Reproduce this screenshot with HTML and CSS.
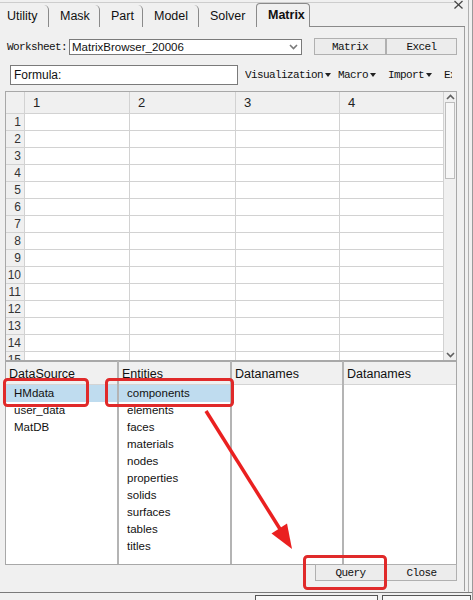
FILE: index.html
```html
<!DOCTYPE html>
<html>
<head>
<meta charset="utf-8">
<link rel="stylesheet" href="styles.css">
</head>
<body>
<div class="win">
  <div class="topline"></div>
  <div class="tabs">
    <div class="tab first">Utility</div>
    <div class="tab w51">Mask</div>
    <div class="tab w43">Part</div>
    <div class="tab w56">Model</div>
    <div class="tab w57 noedge">Solver</div>
    <div class="tab active">Matrix</div>
    <div class="tabfill"></div>
  </div>
  <div class="panel">
    <div class="wsrow">
      <span class="mono wslabel">Worksheet:</span>
      <div class="select">MatrixBrowser_20006
        <svg class="selarrow" width="9" height="6" viewBox="0 0 9 6"><polyline points="1,1 4.5,4.5 8,1" fill="none" stroke="#7a7a7a" stroke-width="1.6"/></svg>
      </div>
      <div class="btn mono b72">Matrix</div>
      <div class="btn mono b71">Excel</div>
    </div>
    <div class="frow">
      <div class="formula">Formula:</div>
      <div class="menus mono">
        <span class="menu m1">Visualization<svg width="6" height="4" viewBox="0 0 6 4"><polygon points="0,0 6,0 3,4" fill="#222"/></svg></span>
        <span class="menu m2">Macro<svg width="6" height="4" viewBox="0 0 6 4"><polygon points="0,0 6,0 3,4" fill="#222"/></svg></span>
        <span class="menu m2">Import<svg width="6" height="4" viewBox="0 0 6 4"><polygon points="0,0 6,0 3,4" fill="#222"/></svg></span>
        <span class="menu">Export</span>
      </div>
    </div>
    <div class="grid">
      <div class="cells">
        <div class="hd"></div><div class="hd">1</div><div class="hd">2</div><div class="hd">3</div><div class="hd">4</div>
        <div class="rh">1</div><div></div><div></div><div></div><div></div>
        <div class="rh">2</div><div></div><div></div><div></div><div></div>
        <div class="rh">3</div><div></div><div></div><div></div><div></div>
        <div class="rh">4</div><div></div><div></div><div></div><div></div>
        <div class="rh">5</div><div></div><div></div><div></div><div></div>
        <div class="rh">6</div><div></div><div></div><div></div><div></div>
        <div class="rh">7</div><div></div><div></div><div></div><div></div>
        <div class="rh">8</div><div></div><div></div><div></div><div></div>
        <div class="rh">9</div><div></div><div></div><div></div><div></div>
        <div class="rh">10</div><div></div><div></div><div></div><div></div>
        <div class="rh">11</div><div></div><div></div><div></div><div></div>
        <div class="rh">12</div><div></div><div></div><div></div><div></div>
        <div class="rh">13</div><div></div><div></div><div></div><div></div>
        <div class="rh">14</div><div></div><div></div><div></div><div></div>
        <div class="rh">15</div><div></div><div></div><div></div><div></div>
      </div>
      <div class="vscroll">
        <div class="arrow"><svg width="9" height="6" viewBox="0 0 9 6"><polyline points="1,5 4.5,1.5 8,5" fill="none" stroke="#606060" stroke-width="1.6"/></svg></div>
        <div class="thumb"></div>
        <div class="track"></div>
        <div class="arrow"><svg width="9" height="6" viewBox="0 0 9 6"><polyline points="1,1 4.5,4.5 8,1" fill="none" stroke="#606060" stroke-width="1.6"/></svg></div>
      </div>
    </div>
    <div class="pane">
      <div class="col c113">
        <div class="colhd">DataSource</div>
        <div class="item sel">HMdata</div>
        <div class="item">user_data</div>
        <div class="item">MatDB</div>
      </div>
      <div class="col c113">
        <div class="colhd">Entities</div>
        <div class="item sel">components</div>
        <div class="item">elements</div>
        <div class="item">faces</div>
        <div class="item">materials</div>
        <div class="item">nodes</div>
        <div class="item">properties</div>
        <div class="item">solids</div>
        <div class="item">surfaces</div>
        <div class="item">tables</div>
        <div class="item">titles</div>
      </div>
      <div class="col c112">
        <div class="colhd">Datanames</div>
      </div>
      <div class="col last">
        <div class="colhd">Datanames</div>
      </div>
    </div>
    <div class="brow">
      <div class="btn mono b71">Query</div>
      <div class="btn mono b71">Close</div>
    </div>
  </div>
</div>
<div class="footer">
  <div class="fbox f1"></div>
  <div class="fbox f2"></div>
</div>
<svg class="overlay" width="473" height="600" viewBox="0 0 473 600">
  <line x1="454.5" y1="1" x2="462.5" y2="8.5" stroke="#444" stroke-width="1.2"/>
  <line x1="462.5" y1="1" x2="454.5" y2="8.5" stroke="#444" stroke-width="1.2"/>
  <rect x="4.5" y="379.5" width="83" height="26" rx="3" fill="none" stroke="#e02a2a" stroke-width="3"/>
  <rect x="106.5" y="379.5" width="126" height="26" rx="3" fill="none" stroke="#e02a2a" stroke-width="3"/>
  <rect x="304.5" y="556.5" width="81" height="32" rx="3" fill="none" stroke="#e02a2a" stroke-width="3"/>
  <line x1="206" y1="411" x2="280" y2="529" stroke="#ea2020" stroke-width="3.5"/>
  <polygon points="292,549 271.5,533.5 287,523.5" fill="#ea2020"/>
</svg>
</body>
</html>
```
FILE: styles.css
```css
* { box-sizing: border-box; }
body {
  margin: 0;
  width: 473px;
  height: 600px;
  overflow: hidden;
  background: #f0f0f0;
  font-family: "Liberation Sans", Arial, sans-serif;
  font-size: 12px;
  color: #111;
  position: relative;
  border-right: 1px solid #9a9a9a;
}
.mono {
  font-family: "Liberation Mono", "Courier New", monospace;
  font-size: 11px;
  letter-spacing: -0.6px;
  color: #111;
}
.win {
  width: 469px;
  height: 592px;
  border-right: 1px solid #b0b0b0;
}
.topline {
  height: 3px;
  border-bottom: 1px solid #cdcdcd;
  margin-right: 12px;
}
.tabs {
  display: flex;
  align-items: flex-end;
  height: 24px;
  width: 465px;
}
.tab {
  height: 22px;
  padding-left: 11px;
  line-height: 22px;
  border-right: 1px solid #8a8a8a;
  border-top-right-radius: 5px;
  font-size: 12.5px;
  color: #111;
}
.tab.first { width: 49px; padding-left: 7px; }
.w51 { width: 51px; }
.w43 { width: 43px; }
.w56 { width: 56px; }
.w57 { width: 57px; }
.tab.noedge { border-right: none; }
.tab.active {
  width: 54px;
  height: 24px;
  line-height: 23px;
  padding-left: 11px;
  font-weight: bold;
  border: 1px solid #8a8a8a;
  border-bottom: none;
  border-radius: 4px 4px 0 0;
  background: #f0f0f0;
}
.tabfill {
  flex: 1;
  height: 1px;
  border-bottom: 1px solid #8a8a8a;
}
.panel {
  width: 465px;
  height: 564px;
  border-right: 1px solid #a0a0a0;
  padding-top: 11px;
  display: flex;
  flex-direction: column;
}
.wsrow {
  display: flex;
  align-items: center;
  height: 17px;
  padding-left: 7px;
}
.wslabel { width: 62px; }
.select {
  position: relative;
  width: 233px;
  height: 16px;
  border: 1px solid #7a7a7a;
  background: #fff;
  font-size: 11.5px;
  line-height: 14px;
  padding-left: 2px;
  display: flex;
  align-items: center;
}
.selarrow { margin-left: auto; margin-right: 3px; }
.btn {
  height: 17px;
  border: 1px solid #b0b0b0;
  background: #ececec;
  display: flex;
  align-items: center;
  justify-content: center;
}
.wsrow .btn.b72 { margin-left: 12px; }
.b72 { width: 72px; }
.b71 { width: 71px; }
.frow {
  display: flex;
  align-items: center;
  margin-top: 10px;
  height: 20px;
  padding-left: 10px;
}
.formula {
  width: 228px;
  height: 20px;
  border: 1px solid #7a7a7a;
  background: #fff;
  font-size: 12px;
  line-height: 18px;
  padding-left: 3px;
}
.menus {
  display: flex;
  align-items: center;
  margin-left: 7px;
  width: 207px;
  overflow: hidden;
  white-space: nowrap;
}
.menu {
  display: inline-flex;
  align-items: center;
}
.menu.m1 { margin-right: 7px; }
.menu.m2 { margin-right: 12px; }
.menu svg { margin-left: 2px; }
.grid {
  margin-top: 6px;
  margin-left: 5px;
  width: 452px;
  height: 270px;
  border: 1px solid #a8a8a8;
  display: flex;
  overflow: hidden;
  background: #fff;
}
.cells {
  display: grid;
  grid-template-columns: 19px 105px 106px 104px 104px;
  grid-template-rows: 22px repeat(15, 17px);
  width: 438px;
}
.cells > div {
  border-right: 1px solid #d2d2d2;
  border-bottom: 1px solid #d2d2d2;
  background: #fff;
}
.cells > .hd {
  background: #f0f0f0;
  font-size: 13px;
  line-height: 22px;
  padding-left: 8px;
  color: #222;
}
.cells > .rh {
  background: #f0f0f0;
  text-align: right;
  padding-right: 3px;
  font-size: 12px;
  line-height: 17px;
  color: #333;
}
.vscroll {
  width: 12px;
  background: #f0f0f0;
  display: flex;
  flex-direction: column;
}
.arrow {
  height: 10px;
  display: flex;
  align-items: center;
  justify-content: center;
}
.thumb {
  margin: 0 1px;
  height: 77px;
  background: #f7f7f7;
  border: 1px solid #bdbdbd;
}
.track { flex: 1; }
.pane {
  margin-left: 5px;
  width: 452px;
  height: 204px;
  border: 1px solid #a8a8a8;
  border-top: none;
  display: flex;
  background: #fff;
}
.col {
  height: 100%;
  border-right: 2px solid #b4b4b4;
}
.c113 { width: 113px; }
.c112 { width: 112px; }
.col.last { flex: 1; border-right: none; }
.colhd {
  height: 24px;
  background: #f0f0f0;
  border-top: 1px solid #a8a8a8;
  border-bottom: 1px solid #d4d4d4;
  font-size: 12.5px;
  line-height: 24px;
  padding-left: 3px;
  color: #111;
}
.item {
  height: 17px;
  line-height: 17px;
  padding-left: 8px;
  font-size: 11.5px;
  color: #111;
}
.item.sel { background: #bfdcef; }
.brow {
  display: flex;
  justify-content: flex-end;
  padding-right: 7px;
  margin-top: -1px;
}
.footer {
  height: 8px;
  border-top: 1px solid #7a7a7a;
  display: flex;
  padding-top: 2px;
}
.fbox {
  height: 10px;
  border: 1px solid #555;
  background: #f8f8f8;
}
.f1 { margin-left: 255px; width: 123px; }
.f2 { margin-left: 4px; width: 89px; }
.overlay {
  position: absolute;
  left: 0;
  top: 0;
  pointer-events: none;
}
```
